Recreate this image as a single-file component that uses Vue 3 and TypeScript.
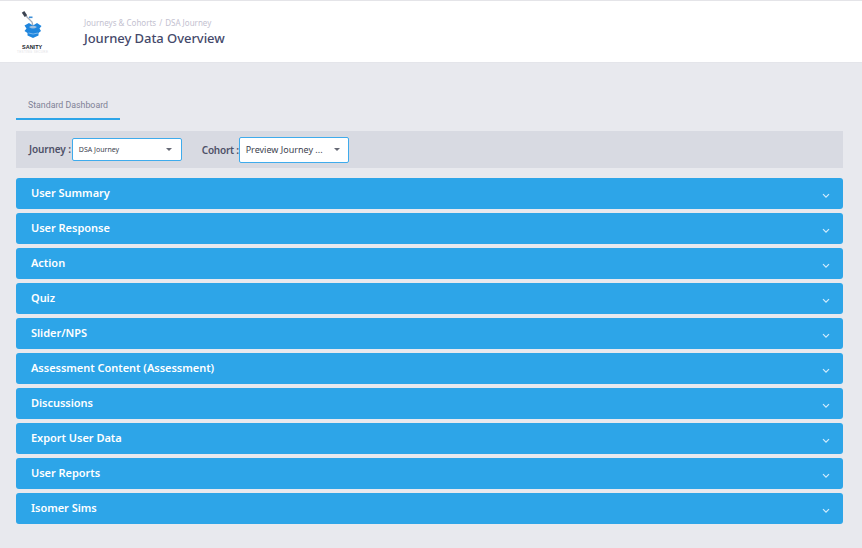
<script setup lang="ts">
const sections: string[] = ['User Summary','User Response','Action','Quiz','Slider/NPS','Assessment Content (Assessment)','Discussions','Export User Data','User Reports','Isomer Sims']
</script>

<template>
  <div class="page">
    <header class="header">
      <div class="logo">
        <svg width="30" height="32" viewBox="0 0 30 32">
          <path d="M8 5 L12 9 L15 12 L16 16" fill="none" stroke="#a4acb8" stroke-width="1.3"/>
          <rect x="6" y="1.5" width="3" height="5" fill="#3a4250" transform="rotate(-35 7.5 4)"/>
          <rect x="12" y="6.5" width="3.5" height="1.6" fill="#3f8fd8"/>
          <path d="M7.5 15.5 L12 13 L16 15.5 L20 13 L24.5 16 L22.5 18.5 L24 21 L21.5 23 L21.5 25.5 L16 28 L10.5 25.5 L10.5 23 L7.5 21 L9.5 18.5 Z" fill="#1f86de"/>
          <path d="M12 17 Q16 14.5 20 17 Q16 20 12 17 Z" fill="#a3bfdc"/>
          <path d="M11.5 23 Q16 25 21 23" fill="none" stroke="#9fcdf2" stroke-width=".7"/>
        </svg>
        <div class="logo-name">SANITY</div>
        <div class="logo-sub">TESTING SECURE</div>
      </div>
      <div class="titles">
        <div class="crumbs"><span>Journeys &amp; Cohorts</span><span>/</span><span>DSA Journey</span></div>
        <h1 class="title">Journey Data Overview</h1>
      </div>
    </header>
    <main class="content">
      <div class="tabs"><div class="tab">Standard Dashboard</div></div>
      <div class="filters">
        <label class="filter">
          <span class="filter-label filter-label-raised">Journey :</span>
          <span class="select select-journey"><span class="value">DSA Journey</span><i class="caret"></i></span>
        </label>
        <label class="filter filter-cohort">
          <span class="filter-label filter-label-tight">Cohort :</span>
          <span class="select select-cohort"><span class="value">Preview Journey ...</span><i class="caret"></i></span>
        </label>
      </div>
      <div class="accordion">
        <div v-for="s in sections" :key="s" class="row">
          <span class="row-label">{{ s }}</span>
          <svg class="chev" width="8" height="6" viewBox="0 0 8 6"><path d="M1 1.2 L4 4.2 L7 1.2" fill="none" stroke="#d2ecfc" stroke-width="1.2"/></svg>
        </div>
      </div>
    </main>
  </div>
</template>

<style>
html, body { margin: 0; background: #e8e9ee; }
</style>

<style scoped>
.page { width: 862px; height: 548px; background: #e8e9ee; overflow: hidden; font-family: "Noto Sans", sans-serif; }
.header { height: 63px; box-sizing: border-box; background: #fff; border-top: 1px solid #e4e4e8; border-bottom: 1px solid #e4e5ea; display: flex; align-items: flex-start; }
.logo { width: 84px; box-sizing: border-box; padding: 9px 0 0 17px; display: flex; flex-direction: column; align-items: flex-start; }
.logo svg { display: block; }
.logo-name { font: 700 5.5px/8px "Liberation Sans", sans-serif; color: #22252c; margin: 1px 0 0 5px; }
.logo-sub { font: 3px/3px "Liberation Sans", sans-serif; color: #e2e2e6; white-space: nowrap; letter-spacing: .35px; }
.titles { padding-top: 15px; }
.crumbs { font-size: 8px; line-height: 12px; color: #c3c1d0; display: flex; gap: 3px; padding-top: 1px; }
.title { margin: 0; font-size: 13px; line-height: 18px; font-weight: 500; color: #45496a; letter-spacing: -.05px; }
.content { padding: 27px 19px 0 16px; }
.tabs { display: flex; height: 31px; }
.tab { width: 104px; height: 30px; box-sizing: border-box; padding-top: 10px; text-align: center; font: 8.8px/11px Roboto, sans-serif; color: #7f8296; border-bottom: 2px solid #2ea5e8; }
.filters { margin-top: 10px; height: 37px; background: #d8dae2; display: flex; align-items: center; padding-left: 13px; gap: 20px; }
.filter { display: flex; align-items: center; gap: 1px; }
.filter-cohort { gap: 0; }
.filter-label { font-size: 10px; font-weight: 600; color: #4e5168; white-space: nowrap; letter-spacing: -.12px; }
.filter-label-raised { padding-bottom: 2px; }
.filter-label-tight { letter-spacing: -.25px; }
.select { background: #fff; border: 1px solid #3fabec; border-radius: 2px; box-sizing: border-box; display: flex; align-items: center; justify-content: space-between; color: #3d3f50; }
.select-journey { width: 110px; height: 23px; padding: 0 9px 0 6px; font-size: 7px; }
.select-cohort { width: 110px; height: 26px; padding: 0 8px 0 6px; font-size: 9px; }
.value { white-space: nowrap; }
.caret { width: 0; height: 0; border-left: 3.5px solid transparent; border-right: 3.5px solid transparent; border-top: 3.5px solid #666975; }
.accordion { margin-top: 9.5px; display: flex; flex-direction: column; gap: 3.5px; }
.row { height: 31.5px; box-sizing: border-box; background: #2da5e8; border-radius: 3px; padding: 0 13px 0 15px; display: flex; align-items: center; justify-content: space-between; color: #fff; font-size: 11px; font-weight: 600; letter-spacing: -.03px; }
.row-label { padding-bottom: 1px; }
.chev { margin-top: 5px; }
</style>
